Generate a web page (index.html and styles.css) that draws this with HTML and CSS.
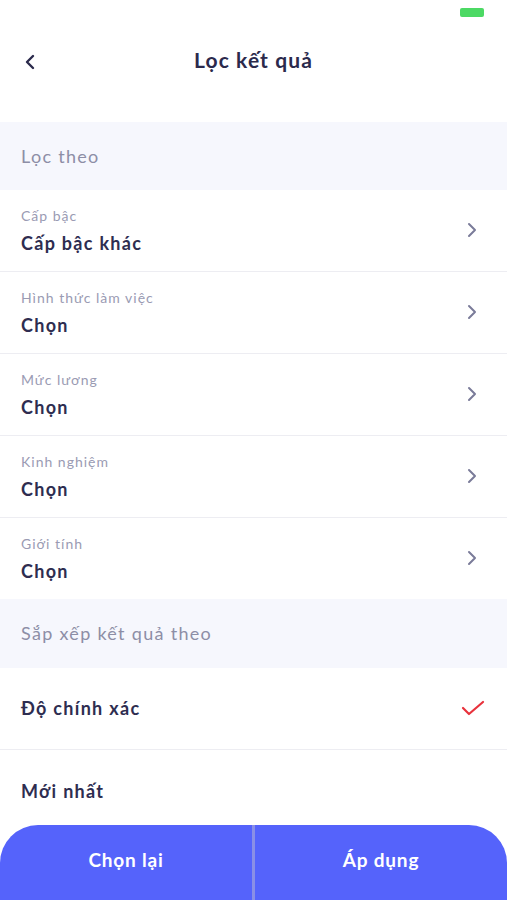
FILE: index.html
```html
<!DOCTYPE html>
<html lang="vi">

<head>
    <meta charset="UTF-8">
    <meta name="viewport" content="width=device-width, initial-scale=1.0">
    <title>Lọc kết quả</title>
    <link rel="stylesheet" href="styles.css">
</head>

<body>
    <div class="screen">
        <div class="status-bar">
            <span class="battery"></span>
        </div>

        <header class="header">
            <button class="back" aria-label="Quay lại">
                <svg width="12" height="16" viewBox="0 0 12 16">
                    <path d="M9 2 L3 8 L9 14" fill="none" stroke="#2b2a4c" stroke-width="2.4" stroke-linecap="round" stroke-linejoin="round" />
                </svg>
            </button>
            <h1>Lọc kết quả</h1>
        </header>

        <div class="section-title">Lọc theo</div>

        <div class="list">
            <div class="row">
                <div class="row-text">
                    <div class="label">Cấp bậc</div>
                    <div class="value">Cấp bậc khác</div>
                </div>
                <svg class="chevron" width="10" height="16" viewBox="0 0 10 16">
                    <path d="M2 2 L8 8 L2 14" fill="none" stroke="#7a7b99" stroke-width="2" stroke-linecap="round" stroke-linejoin="round" />
                </svg>
            </div>
            <div class="row">
                <div class="row-text">
                    <div class="label">Hình thức làm việc</div>
                    <div class="value">Chọn</div>
                </div>
                <svg class="chevron" width="10" height="16" viewBox="0 0 10 16">
                    <path d="M2 2 L8 8 L2 14" fill="none" stroke="#7a7b99" stroke-width="2" stroke-linecap="round" stroke-linejoin="round" />
                </svg>
            </div>
            <div class="row">
                <div class="row-text">
                    <div class="label">Mức lương</div>
                    <div class="value">Chọn</div>
                </div>
                <svg class="chevron" width="10" height="16" viewBox="0 0 10 16">
                    <path d="M2 2 L8 8 L2 14" fill="none" stroke="#7a7b99" stroke-width="2" stroke-linecap="round" stroke-linejoin="round" />
                </svg>
            </div>
            <div class="row">
                <div class="row-text">
                    <div class="label">Kinh nghiệm</div>
                    <div class="value">Chọn</div>
                </div>
                <svg class="chevron" width="10" height="16" viewBox="0 0 10 16">
                    <path d="M2 2 L8 8 L2 14" fill="none" stroke="#7a7b99" stroke-width="2" stroke-linecap="round" stroke-linejoin="round" />
                </svg>
            </div>
            <div class="row">
                <div class="row-text">
                    <div class="label">Giới tính</div>
                    <div class="value">Chọn</div>
                </div>
                <svg class="chevron" width="10" height="16" viewBox="0 0 10 16">
                    <path d="M2 2 L8 8 L2 14" fill="none" stroke="#7a7b99" stroke-width="2" stroke-linecap="round" stroke-linejoin="round" />
                </svg>
            </div>
        </div>

        <div class="section-title">Sắp xếp kết quả theo</div>

        <div class="list">
            <div class="row sort-row">
                <div class="value">Độ chính xác</div>
                <svg class="check" width="24" height="18" viewBox="0 0 24 18">
                    <path d="M2 9 L8 15 L22 3" fill="none" stroke="#e8323c" stroke-width="2.2" stroke-linecap="round" stroke-linejoin="round" />
                </svg>
            </div>
            <div class="row sort-row">
                <div class="value">Mới nhất</div>
            </div>
        </div>

        <div class="actions">
            <button class="action">Chọn lại</button>
            <span class="divider"></span>
            <button class="action">Áp dụng</button>
        </div>
    </div>
</body>

</html>
```

FILE: styles.css
```css
body {
    margin: 0;
    padding: 0;
    background-color: #fff;
    font-family: Lato, "Noto Sans", sans-serif;
    color: #2b2a4c;
}

.screen {
    width: 507px;
    height: 900px;
    display: flex;
    flex-direction: column;
    overflow: hidden;
    position: relative;
}

.status-bar {
    height: 26px;
    display: flex;
    justify-content: flex-end;
    align-items: flex-start;
    padding-right: 23px;
}

.battery {
    width: 24px;
    height: 9px;
    margin-top: 8px;
    background-color: #4cd964;
    border-radius: 2px;
}

.header {
    height: 97px;
    position: relative;
    display: flex;
    justify-content: center;
    align-items: flex-start;
}

.header h1 {
    margin: 21px 0 0;
    font-size: 21px;
    font-weight: 700;
    letter-spacing: 1.1px;
    color: #2b2a4c;
}

.back {
    position: absolute;
    left: 20px;
    top: 27px;
    padding: 0;
    border: none;
    background: none;
    width: 20px;
    height: 18px;
    display: flex;
    align-items: center;
    justify-content: center;
}

.section-title {
    height: 69px;
    background-color: #f6f7fd;
    display: flex;
    align-items: center;
    padding-left: 21px;
    font-size: 18px;
    color: #8d8ea6;
    letter-spacing: 1.3px;
}

.list {
    display: flex;
    flex-direction: column;
}

.row {
    height: 81px;
    border-bottom: 1px solid #ededf2;
    display: flex;
    align-items: center;
    justify-content: space-between;
    padding: 0 30px 0 21px;
}

.row:last-child {
    border-bottom: none;
}

.row-text {
    display: flex;
    flex-direction: column;
    gap: 8px;
    margin-top: -1px;
}

.label {
    font-size: 14px;
    color: #9a9bb3;
    letter-spacing: 1px;
}

.value {
    font-size: 18px;
    font-weight: 700;
    color: #2e2d50;
    letter-spacing: 1.3px;
}

.chevron {
    margin-top: -2px;
}

.sort-row {
    padding-right: 22px;
}

.sort-row:last-child {
    align-items: flex-start;
    padding-top: 30px;
    height: 45px;
}

.actions {
    margin-top: auto;
    height: 76px;
    background-color: #5563fb;
    border-radius: 38px 38px 0 0;
    display: flex;
    align-items: stretch;
}

.action {
    flex: 1;
    border: none;
    background: none;
    color: #fff;
    font-family: Lato, "Noto Sans", sans-serif;
    font-size: 19px;
    font-weight: 700;
    letter-spacing: 0.8px;
    padding: 0 0 6px;
    cursor: pointer;
}

.divider {
    width: 3px;
    background-color: #8a8fe6;
}
```
